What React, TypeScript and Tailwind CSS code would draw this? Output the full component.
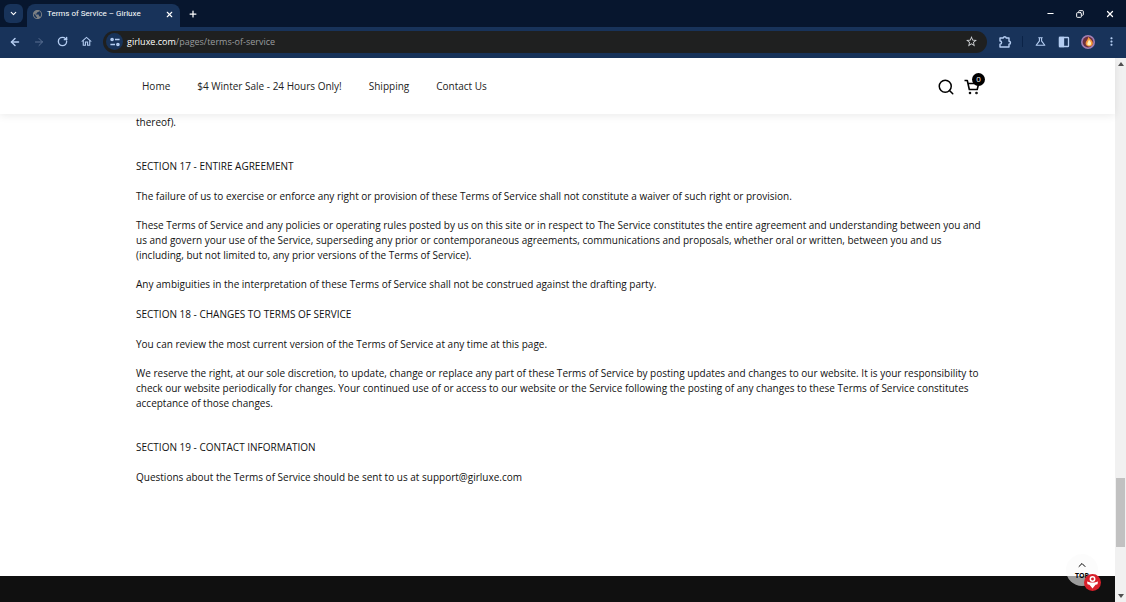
import {
  ArrowLeft,
  ArrowRight,
  ChevronDown,
  ChevronUp,
  Copy,
  Minus,
  Plus,
  RotateCw,
  Search,
  X,
} from "lucide-react";
import {
  MdMoreVert,
  MdOutlineHome,
  MdOutlineScience,
  MdOutlineStarBorder,
  MdPublic,
} from "react-icons/md";

const navLinks = [
  "Home",
  "$4 Winter Sale - 24 Hours Only!",
  "Shipping",
  "Contact Us",
];

function TabStrip() {
  return (
    <div className="flex h-[27px] items-stretch bg-[#07162e] text-white">
      <div className="flex w-[27px] items-center pl-1">
        <button
          aria-label="Search tabs"
          className="flex h-[19px] w-[19px] items-center justify-center rounded-md bg-[#18335a]"
        >
          <ChevronDown size={9} strokeWidth={3} />
        </button>
      </div>

      <div className="mt-1 flex w-[153px] items-center rounded-t-lg bg-[#18335a] px-[5px] pb-[3px]">
        <MdPublic size={11} className="text-[#7d8084]" />
        <span className="ml-1 flex-1 font-['Roboto',sans-serif] text-[8px] whitespace-nowrap">
          Terms of Service – Girluxe
        </span>
        <button aria-label="Close tab" className="mr-px">
          <X size={9} strokeWidth={3} />
        </button>
      </div>

      <button aria-label="New tab" className="ml-2">
        <Plus size={10} strokeWidth={3} />
      </button>

      <div className="ml-auto flex items-center gap-[21px] pr-[11px]">
        <button aria-label="Minimize">
          <Minus size={9} strokeWidth={3} />
        </button>
        <button aria-label="Restore">
          <Copy size={8} strokeWidth={3} className="-scale-x-100" />
        </button>
        <button aria-label="Close window">
          <X size={10} strokeWidth={3} />
        </button>
      </div>
    </div>
  );
}

function Toolbar() {
  return (
    <div className="flex h-[31px] items-center bg-[#18335a] pr-2 pb-[2px] pl-[9px] text-[#b4cdf2]">
      <div className="flex items-center gap-3">
        <button aria-label="Back">
          <ArrowLeft size={12} strokeWidth={3} />
        </button>
        <button aria-label="Forward" className="text-[#5b7193]">
          <ArrowRight size={12} strokeWidth={2} />
        </button>
        <button aria-label="Reload">
          <RotateCw size={11} strokeWidth={3} />
        </button>
        <button aria-label="Home page">
          <MdOutlineHome size={13} />
        </button>
      </div>

      <div className="ml-[10px] flex h-[22px] flex-1 items-center rounded-full bg-[#1f2020] px-[3px]">
        <button
          aria-label="Site information"
          className="flex h-[17px] w-[17px] items-center justify-center rounded-full bg-[#18335a]"
        >
          <svg viewBox="0 0 12 12" className="h-[10px] w-[10px]" fill="none" stroke="currentColor" strokeWidth="2">
            <circle cx="2.5" cy="3" r="1.2" />
            <path d="M6 3h5.5M.5 9H6" />
            <circle cx="9.5" cy="9" r="1.2" />
          </svg>
        </button>
        <p className="ml-1 flex-1 text-[9px] text-[#9a9c9e]">
          <span className="text-white">girluxe.com</span>/pages/terms-of-service
        </p>
        <button aria-label="Bookmark this page" className="mr-[6px] text-[#d0d3d6]">
          <MdOutlineStarBorder size={13} />
        </button>
      </div>

      <div className="ml-[11px] flex items-center">
        <button aria-label="Extensions">
          <svg viewBox="0 0 14 14" className="h-[14px] w-[14px]" fill="none" stroke="currentColor" strokeWidth="1.4" strokeLinejoin="round">
            <path d="M2 3h3.200a1.600 1.600 0 0 1 3.100 0H11v3.200a1.500 1.500 0 0 1 0 3V12H2V9.200a1.600 1.600 0 0 0 0-3.200z" />
          </svg>
        </button>
        <span className="mr-[11px] ml-[10px] h-[11px] w-px bg-[#0b2347]" />
        <button aria-label="Labs">
          <MdOutlineScience size={13} />
        </button>
        <button aria-label="Side panel" className="ml-[11px]">
          <svg viewBox="0 0 12 12" className="h-3 w-3" fill="none" stroke="currentColor" strokeWidth="1.3">
            <rect x="1.5" y="1.5" width="9" height="9" rx=".6" />
            <path d="M1.500 1.500h4v9h-4z" fill="currentColor" />
          </svg>
        </button>
        <button aria-label="Profile" className="ml-[11px]">
          <svg viewBox="0 0 14 14" className="h-[14px] w-[14px]">
            <circle cx="7" cy="7" r="7" fill="#a27fb4" />
            <circle cx="7" cy="7" r="5.4" fill="#6b3040" />
            <path d="M7.500 1.800C8 4 12 5 11.800 8.500c-.3 3.500-6 4-7 .8C4 7 6.500 5.500 7.500 1.800z" fill="#f79a3c" />
            <path d="M8 4.500c1 1.600 2.400 2.700 2 4.600-.5 2-3.500 1.900-3.700 0C6.200 7.500 7.600 6.500 8 4.500z" fill="#fff0b8" />
          </svg>
        </button>
        <button aria-label="Menu" className="ml-[10px]">
          <MdMoreVert size={13} />
        </button>
      </div>
    </div>
  );
}

function SiteHeader() {
  return (
    <header className="flex h-14 shrink-0 items-center bg-white pt-px pr-[135px] pl-[142px] shadow-[0_2px_8px_rgba(0,0,0,0.08)]">
      <nav className="flex gap-[27px] text-[10px] text-[#222]">
        {navLinks.map((label) => (
          <a key={label} href="#">
            {label}
          </a>
        ))}
      </nav>

      <div className="ml-auto flex items-center gap-[9px] text-black">
        <button aria-label="Search">
          <Search size={18} strokeWidth={2} />
        </button>
        <button aria-label="Cart" className="relative">
          <CartIcon />
          <span className="absolute -top-[6px] -right-[5px] flex h-[13px] w-[13px] items-center justify-center rounded-full bg-black text-[8px] text-white">
            0
          </span>
        </button>
      </div>
    </header>
  );
}

function CartIcon() {
  return (
    <svg viewBox="0 0 16 16" className="h-4 w-4" fill="none" stroke="currentColor" strokeWidth="1.6">
      <path d="M.5 1.500h2.800l2 9h7.900l1.500-6H4" strokeLinejoin="round" />
      <circle cx="6" cy="14" r=".5" />
      <circle cx="12.500" cy="14" r=".5" />
    </svg>
  );
}

function Terms() {
  return (
    <main className="flex-1 pt-px pr-[130px] pl-[136px] text-[10px] leading-[15px] text-[#111]">
      <p>thereof).</p>

      <h2 className="mt-[29px]">SECTION 17 - ENTIRE AGREEMENT</h2>
      <p className="mt-[15px]">
        The failure of us to exercise or enforce any right or provision of these
        Terms of Service shall not constitute a waiver of such right or
        provision.
      </p>
      <p className="mt-[14px]">
        These Terms of Service and any policies or operating rules posted by us
        on this site or in respect to The Service constitutes the entire
        agreement and understanding between you and us and govern your use of
        the Service, superseding any prior or contemporaneous agreements,
        communications and proposals, whether oral or written, between you and
        us
        <br />
        (including, but not limited to, any prior versions of the Terms of
        Service).
      </p>
      <p className="mt-[14px]">
        Any ambiguities in the interpretation of these Terms of Service shall
        not be construed against the drafting party.
      </p>

      <h2 className="mt-[15px]">SECTION 18 - CHANGES TO TERMS OF SERVICE</h2>
      <p className="mt-[15px]">
        You can review the most current version of the Terms of Service at any
        time at this page.
      </p>
      <p className="mt-[14px]">
        We reserve the right, at our sole discretion, to update, change or
        replace any part of these Terms of Service by posting updates and
        changes to our website. It is your responsibility to check our website
        periodically for changes. Your continued use of or access to our website
        or the Service following the posting of any changes to these Terms of
        Service constitutes acceptance of those changes.
      </p>

      <h2 className="mt-[29px]">SECTION 19 - CONTACT INFORMATION</h2>
      <p className="mt-[15px]">
        Questions about the Terms of Service should be sent to us at
        support@girluxe.com
      </p>
    </main>
  );
}

function Scrollbar() {
  return (
    <div className="flex w-[11px] shrink-0 flex-col items-center bg-[#f1f1f1]">
      <svg viewBox="0 0 6 4" className="mt-1 h-1 w-[6px]">
        <path d="M0 4l3-4 3 4z" fill="#505050" />
      </svg>
      <div className="flex-1" />
      <div className="h-[69px] w-[9px] bg-[#c1c1c1]" />
      <div className="h-[47px]" />
      <svg viewBox="0 0 6 4" className="mb-1 h-1 w-[6px]">
        <path d="M0 0l3 4 3-4z" fill="#505050" />
      </svg>
    </div>
  );
}

export default function App() {
  return (
    <div className="flex h-screen flex-col overflow-hidden bg-white font-['Open_Sans','Noto_Sans',sans-serif]">
      <TabStrip />
      <Toolbar />
      <div className="flex min-h-0 flex-1">
        <div className="relative flex min-w-0 flex-1 flex-col">
          <SiteHeader />
          <Terms />
          <footer className="h-[26px] shrink-0 bg-[#101010]" />

          <button className="absolute right-[17px] bottom-4 flex h-8 w-8 flex-col items-center justify-center rounded-full bg-[#fafafa]/60 pb-[2px] text-[7px] leading-[9px] font-bold text-black">
            <ChevronUp size={12} strokeWidth={2} />
            TOP
          </button>
          <button aria-label="Accessibility" className="absolute right-[14px] bottom-[11px]">
            <svg viewBox="0 0 17 17" className="h-[17px] w-[17px]">
              <circle cx="8.500" cy="8.500" r="8.500" fill="#d81f2a" />
              <circle cx="8.500" cy="5" r="2.200" fill="none" stroke="#fff" strokeWidth="1.500" />
              <path d="M3 7.500l3.500 1h4l3.500-1-.5 2.800-2 .5L8.500 14.500l-3-3.700-2-.5z" fill="#fff" />
            </svg>
          </button>
        </div>
        <Scrollbar />
      </div>
    </div>
  );
}
